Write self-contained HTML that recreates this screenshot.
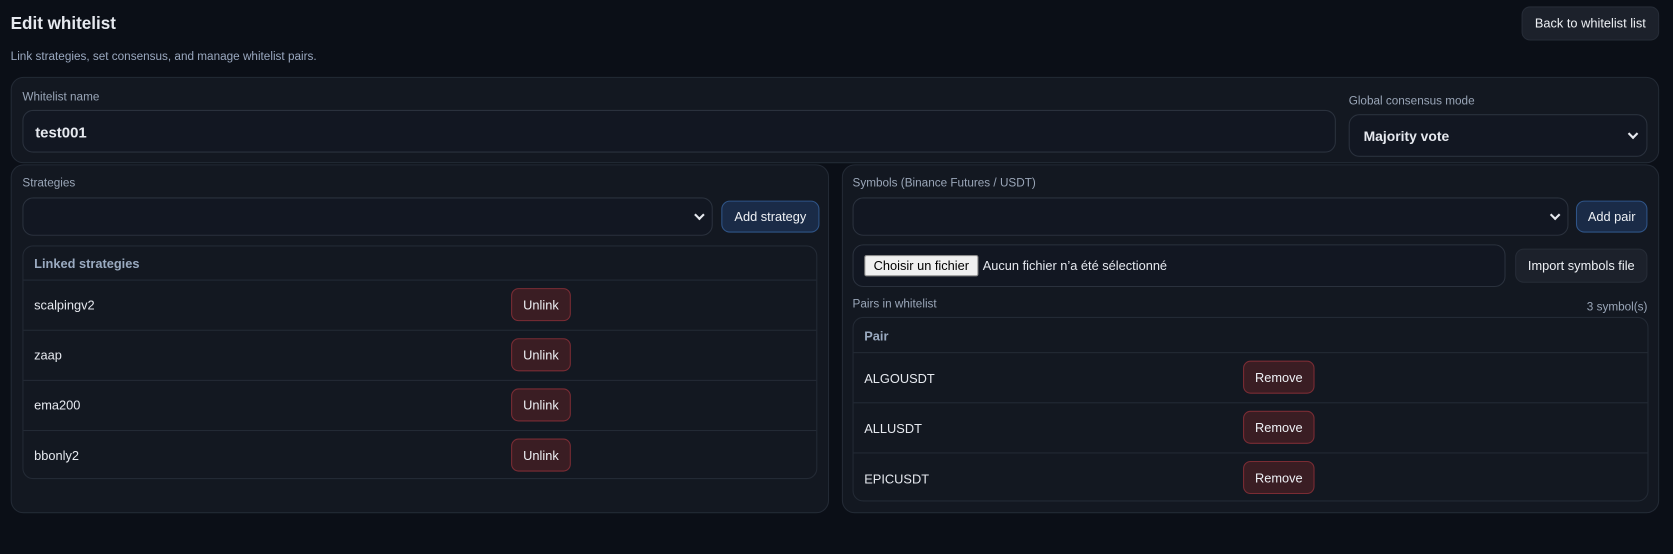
<!DOCTYPE html>
<html><head><meta charset="utf-8"><style>
*{box-sizing:border-box;margin:0;padding:0}
html,body{width:1673px;height:554px;overflow:hidden;background:#0b0f17}
#w{position:absolute;left:0;top:0;width:1568px;height:519px;transform:scale(1.0670);transform-origin:0 0;font-family:"Liberation Sans",sans-serif;color:#e6e9ef}
.a{position:absolute}
.card{position:absolute;background:#131821;border:1px solid #232a35;border-radius:12px}
.lbl{position:absolute;font-size:11px;color:#9aa6b8}
.inp{position:absolute;background:#121722;border:1px solid #2a313d;border-radius:10px}
.btn{position:absolute;border-radius:8px;font-size:12px;display:flex;align-items:center;justify-content:center;color:#eef1f5}
.blue{background:#1a2b47;border:1px solid #2f5487}
.gray{background:#1c212b;border:1px solid #262c37}
.red{background:#3a1d23;border:1px solid #7b2c34;border-radius:7px}
.tbl{position:absolute;border:1px solid #232a35;border-radius:10px;background:#131821}
.row{position:absolute;left:0;right:0;border-top:1px solid #232a35;font-size:12px}
.chev{position:absolute;width:7px;height:7px;border-right:2px solid #e6e9ef;border-bottom:2px solid #e6e9ef;transform:rotate(45deg)}
</style></head><body><div id="w">
<div class="a" style="left:10px;top:14px;font-size:16px;font-weight:bold">Edit whitelist</div>
<div class="a" style="left:10px;top:47px;font-size:11px;color:#9aa8bf">Link strategies, set consensus, and manage whitelist pairs.</div>
<div class="btn gray" style="left:1426px;top:6px;width:129px;height:32px">Back to whitelist list</div>

<div class="card" style="left:10px;top:72px;width:1545px;height:81px"></div>
<div class="lbl" style="left:21px;top:85px">Whitelist name</div>
<div class="inp" style="left:21px;top:103px;width:1231px;height:40px"><span class="a" style="left:11px;top:12px;font-size:14px;font-weight:bold">test001</span></div>
<div class="lbl" style="left:1264px;top:89px">Global consensus mode</div>
<div class="inp" style="left:1264px;top:107px;width:280px;height:40px"><span class="a" style="left:13px;top:12px;font-size:13px;font-weight:bold">Majority vote</span><div class="chev" style="left:262px;top:14px"></div></div>

<div class="card" style="left:10px;top:154px;width:767px;height:327px"></div>
<div class="lbl" style="left:21px;top:166px">Strategies</div>
<div class="inp" style="left:21px;top:185px;width:647px;height:36px"><div class="chev" style="left:630px;top:12px"></div></div>
<div class="btn blue" style="left:676px;top:188px;width:92px;height:30px">Add strategy</div>
<div class="tbl" style="left:21px;top:230px;width:745px;height:219px">
<div class="a" style="left:10px;top:9px;font-size:12px;font-weight:bold;color:#9aaac0">Linked strategies</div>
<div class="row" style="top:31px;height:47px"><span class="a" style="left:10px;top:16px">scalpingv2</span><div class="btn red" style="left:457px;top:7px;width:56px;height:31px">Unlink</div></div>
<div class="row" style="top:78px;height:47px"><span class="a" style="left:10px;top:16px">zaap</span><div class="btn red" style="left:457px;top:7px;width:56px;height:31px">Unlink</div></div>
<div class="row" style="top:125px;height:47px"><span class="a" style="left:10px;top:16px">ema200</span><div class="btn red" style="left:457px;top:7px;width:56px;height:31px">Unlink</div></div>
<div class="row" style="top:172px;height:46px"><span class="a" style="left:10px;top:16px">bbonly2</span><div class="btn red" style="left:457px;top:7px;width:56px;height:31px">Unlink</div></div>
</div>

<div class="card" style="left:789px;top:154px;width:766px;height:327px"></div>
<div class="lbl" style="left:799px;top:166px">Symbols (Binance Futures / USDT)</div>
<div class="inp" style="left:799px;top:185px;width:671px;height:36px"><div class="chev" style="left:654px;top:12px"></div></div>
<div class="btn blue" style="left:1477px;top:188px;width:67px;height:30px">Add pair</div>
<div class="inp" style="left:799px;top:229px;width:612px;height:40px">
<div class="a" style="left:10px;top:9px;width:107px;height:20px;background:#f0f0f0;border:1px solid #8a8a8a;border-radius:2px;color:#000;font-size:12px;text-align:center;line-height:18px">Choisir un fichier</div>
<span class="a" style="left:121px;top:12px;font-size:12px">Aucun fichier n’a été sélectionné</span></div>
<div class="btn gray" style="left:1420px;top:233px;width:124px;height:32px">Import symbols file</div>
<div class="lbl" style="left:799px;top:279px">Pairs in whitelist</div>
<div class="lbl" style="left:1470px;top:282px;width:74px;text-align:right">3 symbol(s)</div>
<div class="tbl" style="left:799px;top:297px;width:746px;height:173px">
<div class="a" style="left:10px;top:10px;font-size:12px;font-weight:bold;color:#9aaac0">Pair</div>
<div class="row" style="top:32px;height:47px"><span class="a" style="left:10px;top:17px">ALGOUSDT</span><div class="btn red" style="left:365px;top:7px;width:67px;height:31px">Remove</div></div>
<div class="row" style="top:79px;height:47px"><span class="a" style="left:10px;top:17px">ALLUSDT</span><div class="btn red" style="left:365px;top:7px;width:67px;height:31px">Remove</div></div>
<div class="row" style="top:126px;height:46px"><span class="a" style="left:10px;top:17px">EPICUSDT</span><div class="btn red" style="left:365px;top:7px;width:67px;height:31px">Remove</div></div>
</div>
</div></body></html>
